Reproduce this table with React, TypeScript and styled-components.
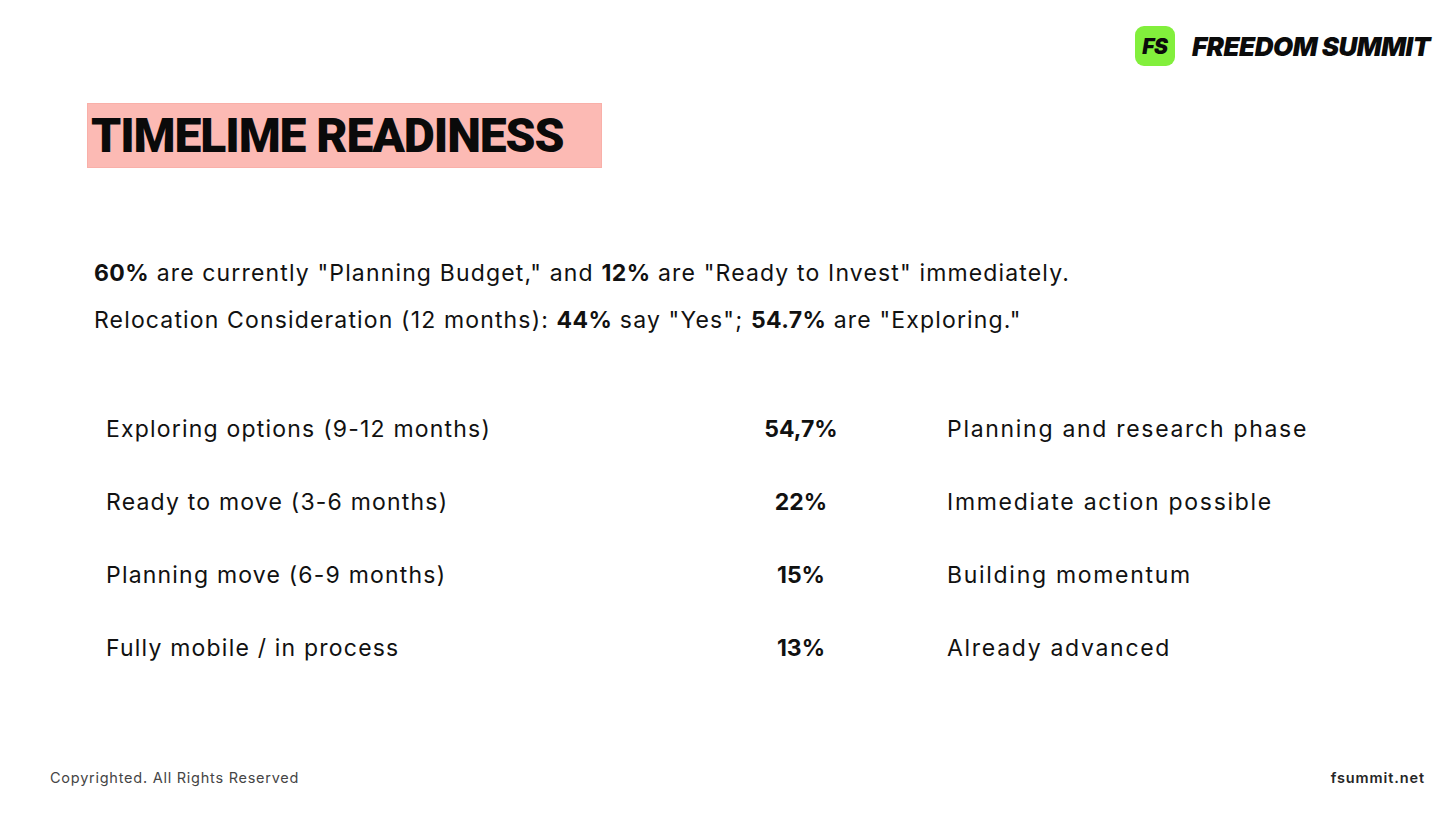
import React from 'react'
import styled, { createGlobalStyle } from 'styled-components'

const GlobalStyle = createGlobalStyle`
  html, body {
    margin: 0;
    padding: 0;
    background: #ffffff;
  }
  body {
    font-family: Inter, "Liberation Sans", sans-serif;
    color: #111111;
  }
`

const Page = styled.div`
  position: relative;
  width: 1456px;
  height: 814px;
  display: flex;
  flex-direction: column;
  overflow: hidden;
  background: #ffffff;
`

const TopBar = styled.header`
  display: flex;
  justify-content: flex-end;
  align-items: center;
  height: 40px;
  padding: 26px 26px 0 0;
`

const Brand = styled.div`
  display: flex;
  align-items: center;
  gap: 17px;
`

const BrandBadge = styled.div`
  width: 40px;
  height: 40px;
  border-radius: 9px;
  background: #82ef3c;
  display: flex;
  align-items: center;
  justify-content: center;
  font-family: Inter, "Liberation Sans", sans-serif;
  font-weight: 900;
  font-style: italic;
  font-size: 21px;
  letter-spacing: -0.5px;
  color: #0b0b0b;
`

const BrandName = styled.span`
  font-family: Inter, "Liberation Sans", sans-serif;
  font-weight: 900;
  font-style: italic;
  font-size: 26px;
  letter-spacing: -0.5px;
  color: #0b0b0b;
`

const TitleBox = styled.div`
  display: flex;
  align-items: center;
  width: 510px;
  height: 63px;
  margin: 37px 0 0 87px;
  padding-left: 3px;
  background: #fcbab4;
  border: 1px solid #f9b0a9;
`

const Title = styled.h1`
  margin: 0;
  white-space: nowrap;
  font-family: Roboto, Inter, "Liberation Sans", sans-serif;
  font-weight: 900;
  font-size: 48px;
  letter-spacing: -1.1px;
  line-height: 1;
  color: #0a0a0a;
`

const Summary = styled.div`
  margin: 82px 0 0 94px;
  font-size: 23px;
  line-height: 47px;
  letter-spacing: 1.15px;
  color: #111111;

  b {
    font-weight: 700;
    letter-spacing: 0.4px;
  }
`

const Table = styled.div`
  display: grid;
  grid-template-columns: 634px 122px 1fr;
  grid-auto-rows: 73px;
  margin: 48px 0 0 106px;
  font-size: 23px;
  letter-spacing: 1.2px;
  color: #111111;
`

const Cell = styled.div<{ $bold?: boolean; $center?: boolean; $indent?: number; $wide?: boolean }>`
  display: flex;
  align-items: center;
  white-space: nowrap;
  justify-content: ${p => (p.$center ? 'center' : 'flex-start')};
  padding-left: ${p => p.$indent ?? 0}px;
  font-weight: ${p => (p.$bold ? 700 : 400)};
  letter-spacing: ${p => (p.$bold ? '0px' : p.$wide ? '1.7px' : 'inherit')};
`

const Footer = styled.footer`
  margin-top: auto;
  display: flex;
  justify-content: space-between;
  align-items: center;
  padding: 0 31px 28px 50px;
  font-size: 14.5px;
  line-height: 16px;
  letter-spacing: 0.75px;
  color: #454545;
`

const FooterLink = styled.span`
  font-weight: 600;
  letter-spacing: 0.9px;
  color: #262626;
`

const rows = [
  { label: 'Exploring options (9-12 months)', value: '54,7%', note: 'Planning and research phase' },
  { label: 'Ready to move (3-6 months)', value: '22%', note: 'Immediate action possible' },
  { label: 'Planning move (6-9 months)', value: '15%', note: 'Building momentum' },
  { label: 'Fully mobile / in process', value: '13%', note: 'Already advanced' },
]

export default function App() {
  return (
    <>
      <GlobalStyle />
      <Page>
        <TopBar>
          <Brand>
            <BrandBadge>FS</BrandBadge>
            <BrandName>FREEDOM SUMMIT</BrandName>
          </Brand>
        </TopBar>

        <TitleBox>
          <Title>TIMELIME READINESS</Title>
        </TitleBox>

        <Summary>
          <div>
            <b>60%</b> are currently "Planning Budget," and <b>12%</b> are "Ready to Invest" immediately.
          </div>
          <div>
            Relocation Consideration (12 months): <b>44%</b> say "Yes"; <b>54.7%</b> are "Exploring."
          </div>
        </Summary>

        <Table>
          {rows.map(r => (
            <React.Fragment key={r.label}>
              <Cell>{r.label}</Cell>
              <Cell $bold $center>{r.value}</Cell>
              <Cell $indent={85} $wide>{r.note}</Cell>
            </React.Fragment>
          ))}
        </Table>

        <Footer>
          <span>Copyrighted. All Rights Reserved</span>
          <FooterLink>fsummit.net</FooterLink>
        </Footer>
      </Page>
    </>
  )
}
